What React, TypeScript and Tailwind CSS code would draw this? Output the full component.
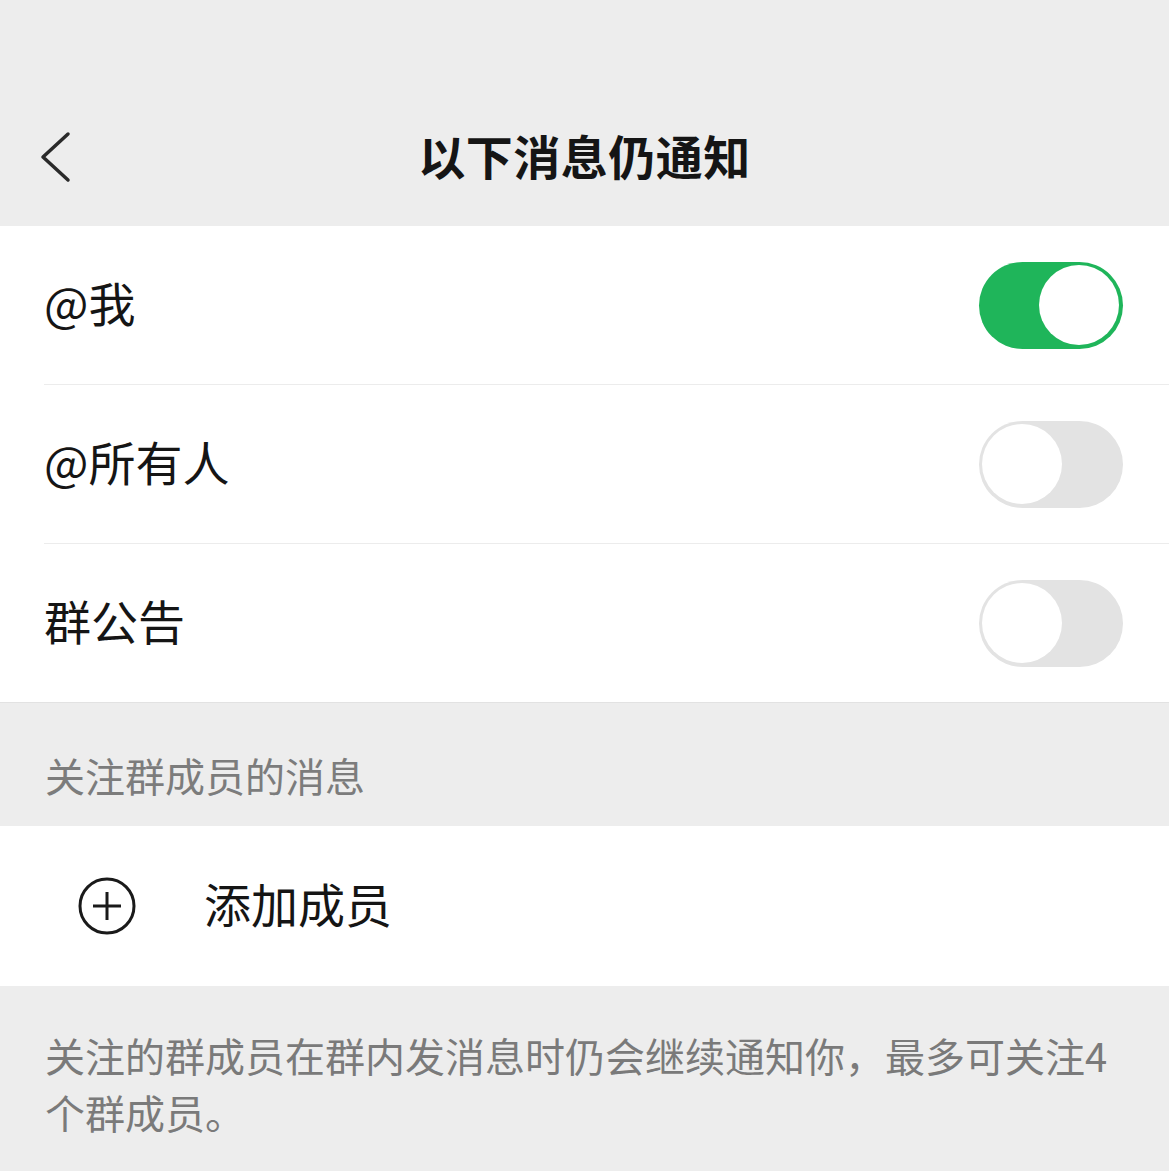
const font = { fontFamily: '"Noto Sans CJK SC", "Noto Sans", sans-serif' };

const Toggle = ({ on }: { on: boolean }) => (
  <div
    className={
      on
        ? 'w-[144px] h-[87px] rounded-full bg-[#1fb55a] flex items-center justify-end p-[4px]'
        : 'w-[144px] h-[87px] rounded-full bg-[#e3e3e3] flex items-center justify-start p-[3px]'
    }
  >
    <div className="w-[80px] h-[80px] rounded-full bg-white" />
  </div>
);

const rows = [
  { label: '@我', on: true },
  { label: '@所有人', on: false },
  { label: '群公告', on: false },
];

export default function App() {
  return (
    <div className="w-[1169px] h-[1171px] bg-[#ededed] overflow-hidden" style={font}>
      {/* Header */}
      <div className="pt-[88px] h-[226px] bg-[#ededed]">
        <div className="grid grid-cols-[1fr_auto_1fr] items-center h-[138px]">
          <div className="pl-[40px] flex items-center">
            <svg width="32" height="52" viewBox="0 0 32 52" fill="none">
              <path d="M28 3 L3 26 L28 49" stroke="#2a2a2a" strokeWidth="3.5" strokeLinecap="round" strokeLinejoin="round" />
            </svg>
          </div>
          <h1 className="mb-[6px] text-[47px] leading-none font-bold text-[#151515] tracking-[0.5px]">以下消息仍通知</h1>
          <div />
        </div>
      </div>

      {/* Toggle rows */}
      <div className="bg-white border-b border-[#e2e2e2]">
        {rows.map((r, i) => (
          <div key={r.label} className="pl-[44px]">
            <div
              className={
                i < rows.length - 1
                  ? 'h-[159px] flex items-center justify-between pr-[46px] border-b border-[#ececec]'
                  : 'h-[158px] flex items-center justify-between pr-[46px]'
              }
            >
              <span className="mb-[7px] text-[47px] leading-none text-[#151515]">{r.label}</span>
              <Toggle on={r.on} />
            </div>
          </div>
        ))}
      </div>

      {/* Section label */}
      <div className="h-[123px] pt-[52px] pl-[45px]">
        <span className="text-[40px] leading-[40px] text-[#7c7c7c]">关注群成员的消息</span>
      </div>

      {/* Add member */}
      <div className="bg-white h-[160px] flex items-center pl-[78px]">
        <svg width="58" height="58" viewBox="0 0 58 58" fill="none">
          <circle cx="29" cy="29" r="27" stroke="#1a1a1a" strokeWidth="3" />
          <path d="M29 15 V43 M15 29 H43" stroke="#1a1a1a" strokeWidth="3" />
        </svg>
        <span className="ml-[68px] mb-[7px] text-[47px] leading-none text-[#151515]">添加成员</span>
      </div>

      {/* Description */}
      <div className="pt-[41px] px-[45px]">
        <p className="text-[40px] leading-[57px] text-[#7a7a7a]">
          关注的群成员在群内发消息时仍会继续通知你，最多可关注4个群成员。
        </p>
      </div>
    </div>
  );
}
